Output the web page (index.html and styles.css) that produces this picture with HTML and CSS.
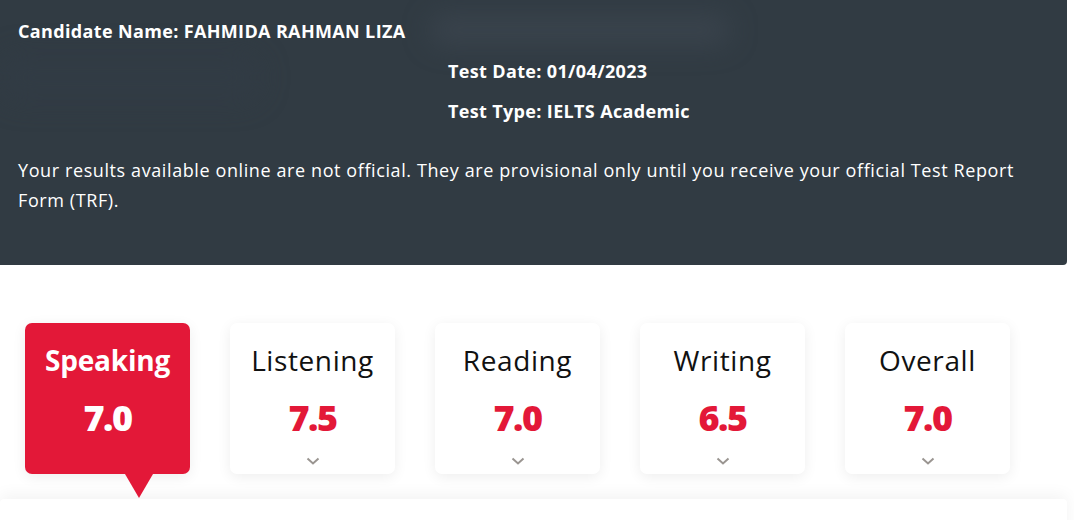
FILE: index.html
```html
<!DOCTYPE html>
<html>
<head>
<meta charset="utf-8">
<link rel="stylesheet" href="styles.css">
</head>
<body>
<section class="header">
  <div class="blur blur-a"></div>
  <div class="blur blur-b"></div>
  <div class="line">Candidate Name: FAHMIDA RAHMAN LIZA</div>
  <div class="meta">
    <div class="line">Test Date: 01/04/2023</div>
    <div class="line">Test Type: IELTS Academic</div>
  </div>
  <p class="note">Your results available online are not official. They are provisional only until you receive your official Test Report Form (TRF).</p>
</section>
<section class="scores">
  <div class="card active">
    <div class="label">Speaking</div>
    <div class="score">7.0</div>
    <span class="pointer"></span>
  </div>
  <div class="card">
    <div class="label">Listening</div>
    <div class="score">7.5</div>
    <svg class="chev" width="14" height="8" viewBox="0 0 14 8"><path d="M1.5 1.5 L7 6.5 L12.5 1.5" fill="none" stroke="#9a9591" stroke-width="2"/></svg>
  </div>
  <div class="card">
    <div class="label">Reading</div>
    <div class="score">7.0</div>
    <svg class="chev" width="14" height="8" viewBox="0 0 14 8"><path d="M1.5 1.5 L7 6.5 L12.5 1.5" fill="none" stroke="#9a9591" stroke-width="2"/></svg>
  </div>
  <div class="card">
    <div class="label">Writing</div>
    <div class="score">6.5</div>
    <svg class="chev" width="14" height="8" viewBox="0 0 14 8"><path d="M1.5 1.5 L7 6.5 L12.5 1.5" fill="none" stroke="#9a9591" stroke-width="2"/></svg>
  </div>
  <div class="card">
    <div class="label">Overall</div>
    <div class="score">7.0</div>
    <svg class="chev" width="14" height="8" viewBox="0 0 14 8"><path d="M1.5 1.5 L7 6.5 L12.5 1.5" fill="none" stroke="#9a9591" stroke-width="2"/></svg>
  </div>
</section>
<section class="panel"></section>
</body>
</html>
```
FILE: styles.css
```css
* { box-sizing: border-box; }
html, body { margin: 0; padding: 0; }
body {
  background: #ffffff;
  font-family: "Open Sans", "Lato", sans-serif;
  width: 1074px;
  height: 520px;
  overflow: hidden;
}
.header {
  position: relative;
  width: 1067px;
  height: 265px;
  background: #313b43;
  color: #ffffff;
  border-bottom-right-radius: 4px;
  padding: 11px 0 0 18px;
  overflow: hidden;
}
.blur {
  position: absolute;
  background: rgba(70, 80, 90, 0.45);
  filter: blur(14px);
  border-radius: 20px;
}
.blur-a { left: 430px; top: 16px; width: 300px; height: 28px; }
.blur-b { left: 0; top: 55px; width: 260px; height: 45px; background: rgba(50, 60, 70, 0.6); }
.line {
  position: relative;
  font-size: 18px;
  font-weight: 700;
  line-height: 40px;
  letter-spacing: 0.35px;
}
.meta { margin-left: 430px; }
.note {
  position: relative;
  margin: 24px 0 0 0;
  font-size: 18px;
  line-height: 30px;
  letter-spacing: 0.6px;
  padding-right: 30px;
}
.scores {
  display: flex;
  gap: 40px;
  padding: 58px 0 0 25px;
}
.card {
  position: relative;
  width: 165px;
  height: 151px;
  background: #fff;
  border-radius: 7px;
  box-shadow: 0 3px 14px rgba(0, 0, 0, 0.07);
  display: flex;
  flex-direction: column;
  align-items: center;
  padding-top: 19px;
}
.label {
  font-size: 28px;
  font-weight: 500;
  line-height: 36px;
  color: #111;
  letter-spacing: 0.6px;
  white-space: nowrap;
}
.score {
  margin-top: 18px;
  font-size: 36px;
  font-weight: 800;
  line-height: 44px;
  color: #e31838;
  letter-spacing: -1.5px;
}
.chev { margin-top: 17px; }
.card.active { background: #e31838; }
.card.active .label { color: #fff; font-weight: 700; letter-spacing: -0.2px; }
.card.active .score { color: #fff; }
.pointer {
  position: absolute;
  left: 100px;
  top: 151px;
  width: 0;
  height: 0;
  border-left: 14px solid transparent;
  border-right: 14px solid transparent;
  border-top: 24px solid #e31838;
}
.panel {
  margin-top: 25px;
  width: 1067px;
  height: 40px;
  background: #fff;
  border-radius: 4px 4px 0 0;
  box-shadow: 0 -4px 16px rgba(0, 0, 0, 0.05);
}
```
